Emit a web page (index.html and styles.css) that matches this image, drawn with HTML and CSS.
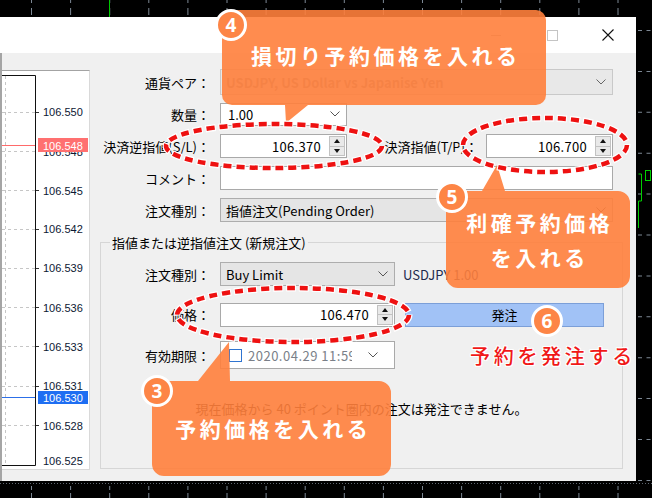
FILE: index.html
```html
<!DOCTYPE html>
<html lang="ja">
<head>
<meta charset="utf-8">
<title>注文</title>
<link rel="stylesheet" href="styles.css">
</head>
<body>
<div class="screen">
  <svg class="strip" width="652" height="17" viewBox="0 0 652 17">
    <line class="tick" x1="31" y1="1.5" x2="652" y2="1.5" stroke-width="3"/>
    <line class="tick" x1="31" y1="11.5" x2="652" y2="11.5" stroke-width="7"/>
    <line x1="109.5" y1="0" x2="109.5" y2="17" stroke="#00c800" stroke-width="1"/>
  </svg>
  <div class="middle">
    <div class="window">
      <div class="titlebar">
        <span class="tb-btn"><span class="tb-min"></span></span>
        <span class="tb-btn"><span class="tb-max"></span></span>
        <span class="tb-btn"><svg width="12" height="12" viewBox="0 0 12 12"><path d="M0.5 0.5 L11.5 11.5 M11.5 0.5 L0.5 11.5" stroke="#111" stroke-width="1.1" fill="none"/></svg></span>
      </div>
      <div class="body">
        <div class="chart">
          <svg width="87" height="398" viewBox="0 0 87 398">
            <g stroke="#c6c6c6" stroke-width="1" stroke-dasharray="3 3" fill="none">
              <line x1="3.5" y1="5" x2="3.5" y2="395"/>
              <line x1="0" y1="41.5" x2="33" y2="41.5"/>
              <line x1="0" y1="80.5" x2="33" y2="80.5"/>
              <line x1="0" y1="119.5" x2="33" y2="119.5"/>
              <line x1="0" y1="158.5" x2="33" y2="158.5"/>
              <line x1="0" y1="197.5" x2="33" y2="197.5"/>
              <line x1="0" y1="236.5" x2="33" y2="236.5"/>
              <line x1="0" y1="275.5" x2="33" y2="275.5"/>
              <line x1="0" y1="315.5" x2="33" y2="315.5"/>
              <line x1="0" y1="354.5" x2="33" y2="354.5"/>
            </g>
            <g stroke="#333" stroke-width="1">
              <line x1="34" y1="41.5" x2="37" y2="41.5"/>
              <line x1="34" y1="119.5" x2="37" y2="119.5"/>
              <line x1="34" y1="158.5" x2="37" y2="158.5"/>
              <line x1="34" y1="197.5" x2="37" y2="197.5"/>
              <line x1="34" y1="236.5" x2="37" y2="236.5"/>
              <line x1="34" y1="275.5" x2="37" y2="275.5"/>
              <line x1="34" y1="315.5" x2="37" y2="315.5"/>
              <line x1="34" y1="354.5" x2="37" y2="354.5"/>
            </g>
            <path d="M0 4.5 H33.5 V394.5 H0" stroke="#111" stroke-width="1" fill="none"/>
            <g class="axis">
              <text x="41" y="45">106.550</text>
              <text x="41" y="85">106.548</text>
              <text x="41" y="124">106.545</text>
              <text x="41" y="162">106.542</text>
              <text x="41" y="201">106.539</text>
              <text x="41" y="241">106.536</text>
              <text x="41" y="280">106.533</text>
              <text x="41" y="319">106.531</text>
              <text x="41" y="359">106.528</text>
              <text x="41" y="394">106.525</text>
            </g>
            <line x1="0" y1="74.5" x2="33" y2="74.5" stroke="#ff6a6a" stroke-width="1"/>
            <rect x="36" y="67" width="50" height="14" fill="#ff7070"/>
            <text class="axis-hl" x="41" y="78.5">106.548</text>
            <line x1="0" y1="326.5" x2="33" y2="326.5" stroke="#2c6fe8" stroke-width="1"/>
            <rect x="36" y="320" width="50" height="13" fill="#1e6ef2"/>
            <text class="axis-hl" x="41" y="331">106.530</text>
          </svg>
        </div>
        <div class="form">
          <div class="rows">
            <span class="lbl">通貨ペア：</span>
            <div class="field combo disabled h26"><span class="muted">USDJPY, US Dollar vs Japanise Yen</span><svg class="chev" width="10" height="6" viewBox="0 0 10 6"><polyline points="0.5,0.5 5,5 9.5,0.5" fill="none" stroke="#666"/></svg></div>

            <span class="lbl">数量：</span>
            <div class="field combo w127 h23"><span class="qty">1.00</span><svg class="chev" width="10" height="6" viewBox="0 0 10 6"><polyline points="0.5,0.5 5,5 9.5,0.5" fill="none" stroke="#555"/></svg></div>

            <span class="lbl">決済逆指値(S/L)：</span>
            <div class="pair">
              <div class="field spin w127"><span class="val">106.370</span><span class="spinbtn"><b><i class="up"></i></b><b><i class="down"></i></b></span></div>
              <span class="lbl2">決済指値(T/P)：</span>
              <div class="field spin w127"><span class="val">106.700</span><span class="spinbtn"><b><i class="up"></i></b><b><i class="down"></i></b></span></div>
            </div>

            <span class="lbl">コメント：</span>
            <div class="field"></div>

            <span class="lbl">注文種別：</span>
            <div class="field combo gray"><span>指値注文(Pending Order)</span><svg class="chev" width="10" height="6" viewBox="0 0 10 6"><polyline points="0.5,0.5 5,5 9.5,0.5" fill="none" stroke="#555"/></svg></div>
          </div>

          <fieldset class="group">
            <legend>指値または逆指値注文 (新規注文)</legend>
            <div class="grows">
              <span class="lbl">注文種別：</span>
              <div class="field combo gray"><span>Buy Limit</span><svg class="chev" width="10" height="6" viewBox="0 0 10 6"><polyline points="0.5,0.5 5,5 9.5,0.5" fill="none" stroke="#555"/></svg></div>
              <span class="sym">USDJPY 1.00</span>

              <span class="lbl">価格：</span>
              <div class="field spin"><span class="val">106.470</span><span class="spinbtn"><b><i class="up"></i></b><b><i class="down"></i></b></span></div>
              <button class="order" type="button">発注</button>

              <span class="lbl">有効期限：</span>
              <div class="field dt"><span class="check"></span><span class="dt-text">2020.04.29 11:59</span><svg class="chev" width="10" height="6" viewBox="0 0 10 6"><polyline points="0.5,0.5 5,5 9.5,0.5" fill="none" stroke="#555"/></svg></div>
              <span></span>
            </div>
            <p class="msg">現在価格から 40 ポイント圏内の注文は発注できません。</p>
          </fieldset>
        </div>
      </div>
    </div>
    <svg class="strip" width="16" height="464" viewBox="0 0 16 464">
      <line class="tick2" x1="4" y1="13" x2="4" y2="464" stroke-width="4"/>
      <line class="tick2" x1="12.5" y1="13" x2="12.5" y2="464" stroke-width="4"/>
      <path d="M2.5 157 H5.5 V184 H2.5 V211" stroke="#00d000" fill="none" stroke-width="1"/>
      <rect x="9.5" y="153.5" width="5" height="10" stroke="#00d000" fill="none"/>
    </svg>
  </div>
  <svg class="strip" width="652" height="17" viewBox="0 0 652 17">
    <line x1="0" y1="2.5" x2="652" y2="2.5" stroke="#5e6670" stroke-width="1" stroke-dasharray="1 2"/>
    <line class="tick" x1="31" y1="7" x2="652" y2="7" stroke-width="4"/>
    <line class="tick" x1="31" y1="14.5" x2="652" y2="14.5" stroke-width="5"/>
  </svg>

  <svg class="marks" width="652" height="498" viewBox="0 0 652 498">
    <g class="bubble">
      <path d="M232 10 H536 A10 10 0 0 1 546 20 V95 A10 10 0 0 1 536 105 H308 L286 123 L285 105 H232 A10 10 0 0 1 222 95 V20 A10 10 0 0 1 232 10 Z"/>
      <path d="M458 191 H482 L497 165 L505 191 H618 A12 12 0 0 1 630 203 V276 A12 12 0 0 1 618 288 H458 A12 12 0 0 1 446 276 V203 A12 12 0 0 1 458 191 Z"/>
      <path d="M164 381 H198 L229 342 L230 381 H379 A12 12 0 0 1 391 393 V464 A12 12 0 0 1 379 476 H164 A12 12 0 0 1 152 464 V393 A12 12 0 0 1 164 381 Z"/>
    </g>
    <g class="ring-w">
      <ellipse cx="274" cy="146" rx="108" ry="22"/>
      <ellipse cx="545" cy="145" rx="82" ry="27"/>
      <ellipse cx="293" cy="315" rx="116" ry="27"/>
    </g>
    <g class="ring-r">
      <ellipse cx="274" cy="146" rx="108" ry="22"/>
      <ellipse cx="545" cy="145" rx="82" ry="27"/>
      <ellipse cx="293" cy="315" rx="116" ry="27"/>
    </g>
  </svg>

  <div class="callout c4">損切り予約価格を入れる</div>
  <div class="callout c5">利確予約価格<br>を入れる</div>
  <div class="callout c3">予約価格を入れる</div>
  <div class="note">予約を発注する</div>

  <span class="badge b4">4</span>
  <span class="badge b5">5</span>
  <span class="badge b3">3</span>
  <span class="badge b6">6</span>
</div>
</body>
</html>
```

FILE: styles.css
```css
html, body {
  margin: 0;
  padding: 0;
  background: #000;
}

.screen {
  position: relative;
  width: 652px;
  height: 498px;
  overflow: hidden;
  background: #000;
  font-family: "Noto Sans CJK JP", "Noto Sans", sans-serif;
  font-size: 13px;
  color: #000;
}

svg {
  display: block;
}

.strip .tick {
  stroke: #7d8894;
  stroke-dasharray: 1 38.1;
}

.strip .tick2 {
  stroke: #7d8894;
  stroke-dasharray: 1 39.9;
}

.middle {
  display: flex;
  height: 464px;
}

.window {
  width: 636px;
  display: flex;
  flex-direction: column;
  background: #f0f0f0;
}

.titlebar {
  height: 36px;
  flex: none;
  background: #fff;
  display: flex;
  justify-content: flex-end;
}

.tb-btn {
  width: 56px;
  display: flex;
  align-items: center;
  justify-content: center;
}

.tb-min {
  width: 10px;
  height: 1px;
  background: #b8b8b8;
}

.tb-max {
  width: 9px;
  height: 9px;
  border: 1px solid #c4c4c4;
}

.body {
  flex: 1;
  display: flex;
  min-height: 0;
  border-left: 2px solid #a5a5a5;
}

.chart {
  flex: none;
  width: 87px;
  height: 398px;
  margin-top: 17px;
  background: #fff;
  border: 1px solid #d9d9d9;
  border-left: 0;
  border-top-color: #a3a3a3;
}

.axis text {
  font-family: "Liberation Sans", Arial, sans-serif;
  font-size: 11px;
  fill: #0c1733;
}

.axis-hl {
  font-family: "Liberation Sans", Arial, sans-serif;
  font-size: 11px;
  fill: #fff;
}

.form {
  flex: 1;
  min-width: 0;
  padding: 13px 13px 12px 10px;
  display: flex;
  flex-direction: column;
}

.rows {
  display: grid;
  grid-template-columns: 110px 393px;
  column-gap: 10px;
  grid-auto-rows: 32px;
  align-items: center;
}

.lbl {
  text-align: right;
  white-space: nowrap;
  line-height: 19px;
}

.field {
  box-sizing: border-box;
  height: 24px;
  border: 1px solid #a9a9a9;
  background: #fff;
  display: flex;
  align-items: center;
  white-space: nowrap;
  overflow: hidden;
}

.combo {
  padding-left: 5px;
}

.chev {
  margin-left: auto;
  margin-right: 6px;
  flex: none;
}

.disabled {
  background: #e8e8e8;
  border-color: #c9c9c9;
}

.gray {
  background: #e5e5e5;
  border-color: #adadad;
}

.h26 {
  height: 26px;
}

.h23 {
  height: 23px;
}

.w127 {
  width: 127px;
}

.muted {
  color: #9a9a9a;
  font-weight: 700;
}

.qty {
  padding-left: 2px;
}

.pair {
  display: flex;
  align-items: center;
}

.lbl2 {
  flex: 1;
  text-align: right;
  padding-right: 8px;
  white-space: nowrap;
}

.spin .val {
  flex: 1;
  text-align: right;
  padding-right: 8px;
  letter-spacing: 0.3px;
}

.spinbtn {
  flex: none;
  width: 17px;
  align-self: stretch;
  display: flex;
  flex-direction: column;
  padding: 1px 1px 1px 0;
  box-sizing: border-box;
}

.spinbtn b {
  flex: 1;
  display: flex;
  align-items: center;
  justify-content: center;
  background: #e9e9e9;
  border: 1px solid #c2c2c2;
}

.spinbtn b + b {
  border-top: 0;
}

.up {
  width: 0;
  height: 0;
  border-left: 3.5px solid transparent;
  border-right: 3.5px solid transparent;
  border-bottom: 4px solid #111;
}

.down {
  width: 0;
  height: 0;
  border-left: 3.5px solid transparent;
  border-right: 3.5px solid transparent;
  border-top: 4px solid #111;
}

.group {
  flex: 1;
  min-width: 0;
  min-height: 0;
  margin: 6.5px 0 0;
  padding: 0;
  border: 1px solid #d6d6d6;
}

.group legend {
  margin-left: 9px;
  padding: 0 2px;
  line-height: 19px;
}

.grows {
  display: grid;
  grid-template-columns: 109px 175px 1fr;
  column-gap: 10px;
  row-gap: 8.5px;
  grid-auto-rows: 32px;
  align-items: center;
  margin-top: 6.5px;
}

.sym {
  margin-left: -2px;
  color: #1d2a4d;
}

.order {
  box-sizing: border-box;
  width: 199px;
  height: 24px;
  padding: 0;
  background: #a1c2f6;
  border: 1px solid #7c9fd8;
  font: inherit;
  color: #000;
}

.dt {
  height: 28px;
}

.check {
  flex: none;
  width: 11px;
  height: 11px;
  border: 1px solid #2f74d0;
  background: #fff;
  margin: 0 6px 0 8px;
}

.dt-text {
  width: 104px;
  overflow: hidden;
  color: #7a7f88;
  letter-spacing: 0.5px;
}

.dt .chev {
  margin-right: 16px;
}

.msg {
  margin: 27.5px 0 0;
  text-align: center;
  line-height: 19px;
}

/* annotations */
.marks {
  position: absolute;
  left: 0;
  top: 0;
  pointer-events: none;
}

.bubble path {
  fill: rgb(255, 128, 60);
  fill-opacity: 0.9;
}

.ring-w ellipse {
  fill: none;
  stroke: #fff;
  stroke-width: 7;
  stroke-dasharray: 10 3;
  stroke-dashoffset: 1;
}

.ring-r ellipse {
  fill: none;
  stroke: #ee1111;
  stroke-width: 4.5;
  stroke-dasharray: 8 5;
}

.callout {
  position: absolute;
  display: flex;
  align-items: center;
  justify-content: center;
  text-align: center;
  color: #fff;
  font-weight: 700;
  font-size: 21px;
  letter-spacing: 3.5px;
  padding-left: 3.5px;
  box-sizing: border-box;
  line-height: 35px;
}

.c4 {
  left: 222px;
  top: 8px;
  width: 324px;
  height: 95px;
}

.c5 {
  left: 446px;
  top: 191px;
  width: 184px;
  height: 97px;
}

.c3 {
  left: 152px;
  top: 381px;
  width: 239px;
  height: 95px;
}

.note {
  position: absolute;
  left: 470px;
  top: 341px;
  color: #f01818;
  font-size: 20px;
  font-weight: 500;
  letter-spacing: 3.7px;
  line-height: 30px;
  white-space: nowrap;
  text-shadow: 1px 0 0 #fff, -1px 0 0 #fff, 0 1px 0 #fff, 0 -1px 0 #fff, 1px 1px 0 #fff, -1px -1px 0 #fff, 1px -1px 0 #fff, -1px 1px 0 #fff;
}

.badge {
  position: absolute;
  box-sizing: border-box;
  width: 32px;
  height: 32px;
  border: 3px solid #fff;
  border-radius: 50%;
  background: #fd8546;
  color: #fff;
  font-family: "Noto Sans", sans-serif;
  font-weight: 700;
  font-size: 19px;
  line-height: 1;
  display: flex;
  align-items: center;
  justify-content: center;
}

.b4 {
  left: 215px;
  top: 9px;
}

.b5 {
  left: 436px;
  top: 181px;
}

.b3 {
  left: 141px;
  top: 375px;
}

.b6 {
  left: 531px;
  top: 305px;
}
```
